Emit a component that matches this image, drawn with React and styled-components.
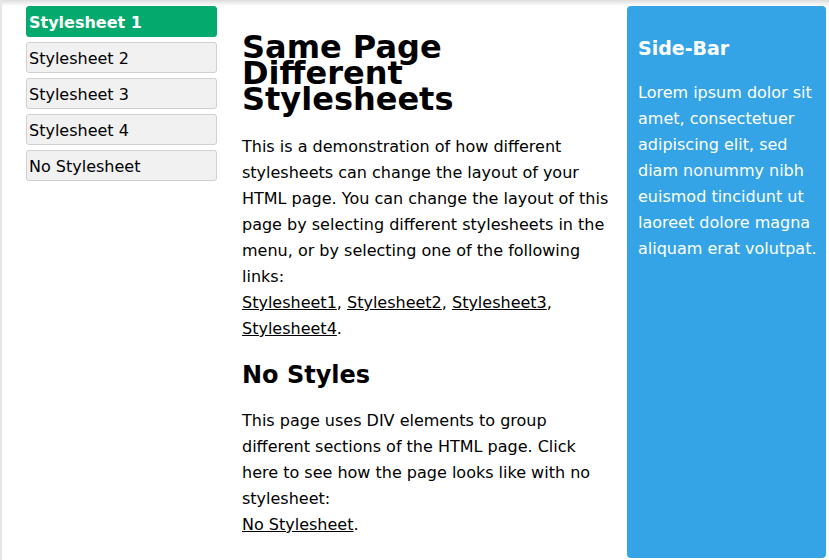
import React from "react";
import styled, { createGlobalStyle } from "styled-components";

const Global = createGlobalStyle`
  html, body { margin: 0; padding: 0; background: #fff; }
  body { font-family: Verdana, "DejaVu Sans", sans-serif; color: #000; }
`;

const Frame = styled.div`
  position: relative;
  width: 829px;
  height: 560px;
  box-sizing: border-box;
  border-left: 2px solid #e6e6e6;
  overflow: hidden;
  &::before {
    content: "";
    position: absolute;
    left: 0; right: 0; top: 0;
    height: 6px;
    background: linear-gradient(#dcdcdc, rgba(255,255,255,0));
    pointer-events: none;
  }
`;

const Layout = styled.div`
  display: flex;
  align-items: flex-start;
  padding: 6px 3px 0 24px;
  height: 100%;
  box-sizing: border-box;
`;

const Menu = styled.nav`
  width: 191px;
  display: flex;
  flex-direction: column;
  gap: 5px;
  flex-shrink: 0;
`;

const MenuItem = styled.a`
  display: block;
  box-sizing: border-box;
  height: 31px;
  padding: 5px 2px 3px;
  border: 1px solid ${p => (p.$active ? "#04AA6D" : "#d0d0d0")};
  border-radius: 3px;
  background: ${p => (p.$active ? "#04AA6D" : "#f1f1f1")};
  color: ${p => (p.$active ? "#fff" : "#000")};
  font-weight: ${p => (p.$active ? "bold" : "normal")};
  font-size: 16px;
  line-height: 21px;
  text-decoration: none;
  white-space: nowrap;
`;

const Main = styled.main`
  margin-left: 25px;
  width: 372px;
  flex-shrink: 0;
`;

const Title = styled.h1`
  margin: 28px 0 0;
  font-size: 32px;
  line-height: 26px;
  font-weight: bold;
`;

const Para = styled.p`
  margin: ${p => p.$top}px 0 0;
  font-size: 16px;
  line-height: 26px;
`;

const SubTitle = styled.h2`
  margin: 17px 0 0;
  font-size: 24px;
  line-height: 32px;
  font-weight: bold;
`;

const Link = styled.a`
  color: #000;
  text-decoration: underline;
`;

const SideBar = styled.aside`
  margin-left: auto;
  width: 199px;
  height: 552px;
  box-sizing: border-box;
  padding: 30px 2px 30px 11px;
  background: #35a4e6;
  border-radius: 4px;
  color: #fff;
`;

const SideTitle = styled.h3`
  margin: 0;
  font-size: 19px;
  line-height: 24px;
  font-weight: bold;
`;

const SideText = styled.p`
  margin: 20px 0 0;
  font-size: 16px;
  line-height: 26px;
`;

export default function App() {
  const items = ["Stylesheet 1", "Stylesheet 2", "Stylesheet 3", "Stylesheet 4", "No Stylesheet"];
  return (
    <>
      <Global />
      <Frame>
        <Layout>
          <Menu>
            {items.map((t, i) => (
              <MenuItem key={t} href="#" $active={i === 0}>{t}</MenuItem>
            ))}
          </Menu>
          <Main>
            <Title>Same Page<br />Different<br />Stylesheets</Title>
            <Para $top={22}>
              This is a demonstration of how different stylesheets can change the layout of your HTML page. You can change the layout of this page by selecting different stylesheets in the menu, or by selecting one of the following links:<br />
              <Link href="#">Stylesheet1</Link>, <Link href="#">Stylesheet2</Link>, <Link href="#">Stylesheet3</Link>, <Link href="#">Stylesheet4</Link>.
            </Para>
            <SubTitle>No Styles</SubTitle>
            <Para $top={17}>
              This page uses DIV elements to group different sections of the HTML page. Click here to see how the page looks like with no stylesheet:<br />
              <Link href="#">No Stylesheet</Link>.
            </Para>
          </Main>
          <SideBar>
            <SideTitle>Side-Bar</SideTitle>
            <SideText>Lorem ipsum dolor sit amet, consectetuer adipiscing elit, sed diam nonummy nibh euismod tincidunt ut laoreet dolore magna aliquam erat volutpat.</SideText>
          </SideBar>
        </Layout>
      </Frame>
    </>
  );
}
